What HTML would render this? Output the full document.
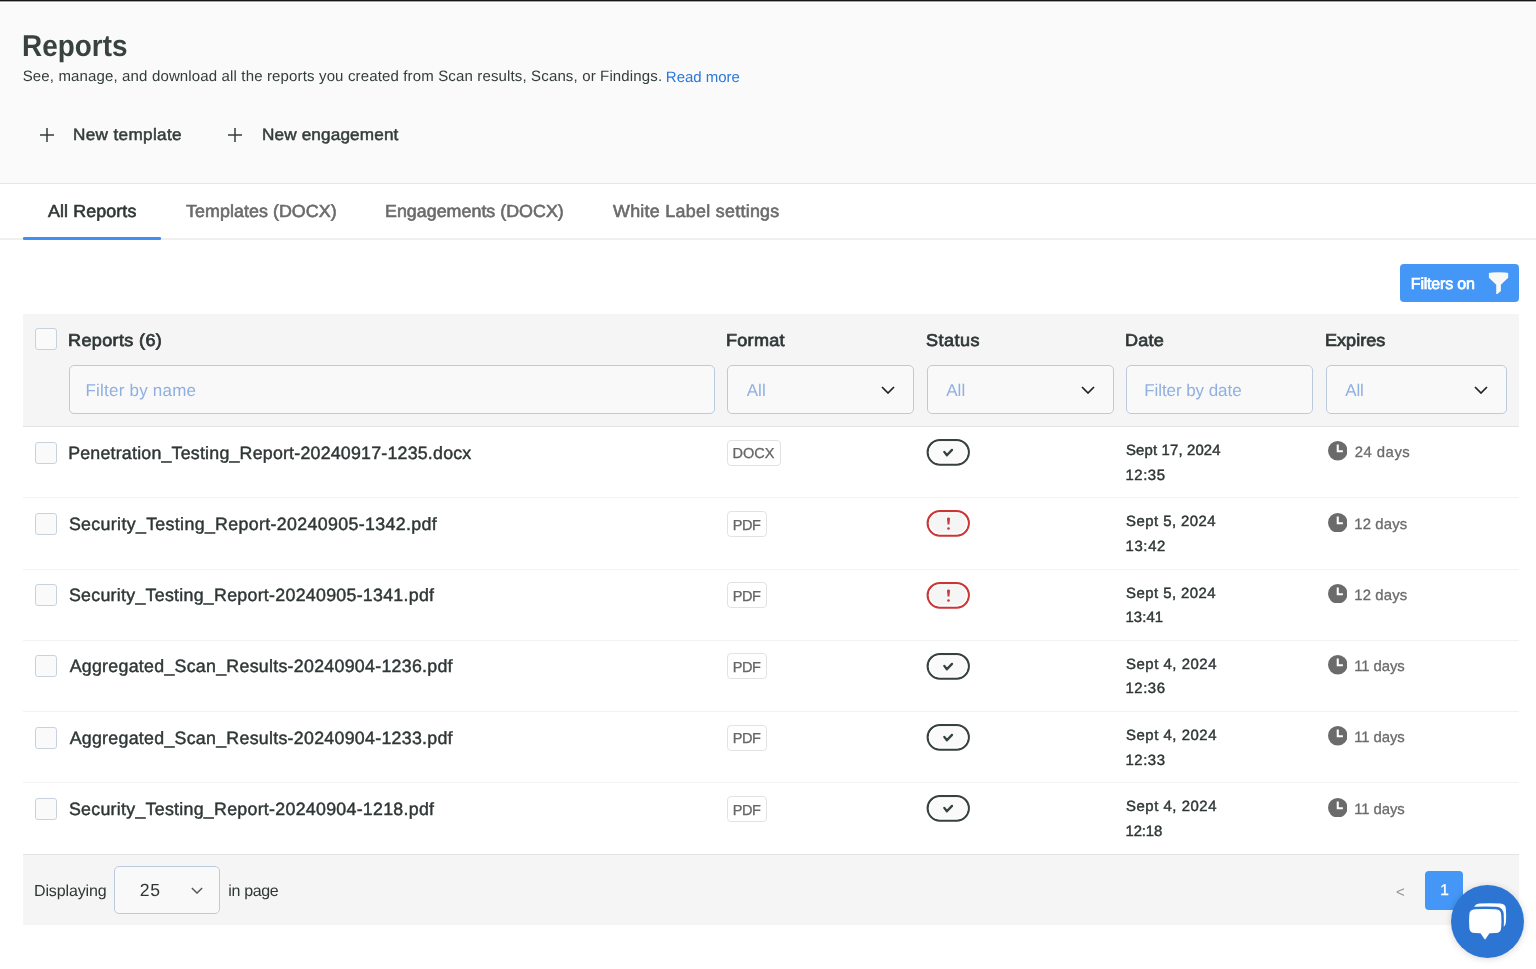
<!DOCTYPE html>
<html lang="en">
<head>
<meta charset="utf-8">
<title>Reports</title>
<style>
*{box-sizing:border-box;margin:0;padding:0}
html,body{width:1536px;height:969px;overflow:hidden;background:#fff}
body{text-rendering:geometricPrecision;font-family:"Liberation Sans",Arial,sans-serif;color:#333d3b;position:relative}
.abs{position:absolute;white-space:nowrap;line-height:1}
.topbar{position:absolute;left:0;top:0;width:1536px;height:3px;background:linear-gradient(#161616 0,#161616 1px,#a4a4a4 1px,#a4a4a4 2px,#fff 2px,#fff 3px)}
.head{position:absolute;left:0;top:0;width:1536px;height:184px;background:#fafafa;border-bottom:1px solid #e6e6e6}
.med{-webkit-text-stroke:0.3px currentColor}
.semi{-webkit-text-stroke:0.6px currentColor}
.med2{-webkit-text-stroke:0.45px currentColor}
.semi5{-webkit-text-stroke:0.5px currentColor}
h1{font-size:30.2px;font-weight:700;left:23px;top:31.75px;letter-spacing:0;color:#38423f;transform:scaleX(0.925);transform-origin:0 0}
.sub{font-size:15px;left:23px;top:68.5px;letter-spacing:0;color:#333d3b}
.sub a{color:#2a78d8;text-decoration:none;position:relative;top:1.05px}
.btxt{font-size:16.5px;top:127.1px;transform:scaleX(1.04);transform-origin:0 0}
.plus{position:absolute;width:14px;height:14px}
.tabs{position:absolute;left:0;top:184px;width:1536px;height:56px;border-bottom:2px solid #efefef}
.tab{font-size:17.5px;top:202.8px;color:#6b6b6b;transform:scaleX(1.02);transform-origin:0 0}
.tab.on{color:#2f3636}
.tabline{position:absolute;left:23px;top:237px;width:138px;height:3px;background:#3f8ff5;border-radius:1px}
.fbtn{position:absolute;left:1400px;top:264px;width:119px;height:38px;background:#4496f7;border-radius:4px;color:#fff}
.thead{position:absolute;left:23px;top:314px;width:1496px;height:113px;background:#f5f5f5;border-bottom:1px solid #e4e4e4}
.th{font-size:17.2px;-webkit-text-stroke:0.7px currentColor;top:332.4px;color:#2f3636;transform:scaleX(1.05);transform-origin:0 0}
.cb{position:absolute;left:35px;width:22px;height:22px;border:1px solid #c8d2df;border-radius:3px;background:#fafafb}
.inp{position:absolute;top:365px;height:48.5px;border:1px solid #bccadd;border-radius:5px;background:#f9f9f9;font-size:17px;color:#8fb0e0}
.inp span{position:absolute;top:15.8px;line-height:1;white-space:nowrap}
.chev{position:absolute;width:14px;height:8px}
.row{position:absolute;left:23px;width:1496px;border-bottom:1px solid #f2f2f2}
.fname{font-size:17.8px;left:69px;color:#2f3636}
.badge{position:absolute;left:727px;height:26px;border:1px solid #e2e2e2;border-radius:4px;font-size:14.5px;color:#666;background:#fff}
.badge span{position:absolute;left:5px;top:6.9px;line-height:1;-webkit-text-stroke:0.3px currentColor;letter-spacing:0}
.pill{position:absolute;left:926.5px;width:43px;height:26px;border:2px solid #374040;border-radius:13px;background:#f8f8f8}
.pill.err{border-color:#d03a3a;background:#f5f5f5}
.date{font-size:14.9px;left:1126px;color:#2f3636;letter-spacing:0}
.exp{font-size:14.9px;left:1355px;color:#6b6b6b;letter-spacing:0}
.clock{position:absolute;left:1327.8px;width:19.5px;height:19.5px}
.foot{position:absolute;left:23px;top:854px;width:1496px;height:71px;background:#f5f5f5;border-top:1px solid #e4e4e4}
.ft{font-size:16px;top:883.9px;color:#2f3636}
.pg{position:absolute;left:1425px;top:871px;width:38px;height:38.5px;background:#4496f7;border-radius:4px;color:#fff}
.chat{position:absolute;left:1451px;top:885px;width:73px;height:73px;border-radius:50%;background:#2c75d3;box-shadow:0 1px 7px rgba(0,0,0,.16)}
#title{letter-spacing:0.016px;margin-left:-0.75px}
#subt{letter-spacing:0.146px;margin-left:-0.35px}
#rm{letter-spacing:-0.031px;margin-left:-0.6px}
#b1{letter-spacing:0.327px;margin-left:-0.7px}
#b2{letter-spacing:0.135px;margin-left:-0.4px}
#t1{letter-spacing:0.1px;margin-left:0.2px}
#t2{letter-spacing:0.056px;margin-left:0.2px}
#t3{letter-spacing:0.012px;margin-left:-0.2px}
#t4{letter-spacing:0.284px;margin-left:0.25px}
#fon{letter-spacing:-0.194px;margin-left:-1.2px}
#h1{letter-spacing:0.34px;margin-left:-0.7px}
#h2{letter-spacing:0.26px;margin-left:-0.8px}
#h3{letter-spacing:0.45px;margin-left:-0.85px}
#h4{letter-spacing:0.25px;margin-left:-0.6px}
#h5{letter-spacing:0.025px;margin-left:-0.9px}
#p1{letter-spacing:0.223px;margin-left:-0.55px}
#p2{letter-spacing:0.05px;margin-left:0.7px}
#p3{letter-spacing:0.05px;margin-left:0.7px}
#p4{letter-spacing:-0.062px;margin-left:-0.85px}
#p5{letter-spacing:-0.225px;margin-left:0.3px}
#fn0{letter-spacing:0.219px;margin-left:-0.85px}
#fn1{letter-spacing:0.345px;margin-left:-0.1px}
#fn2{letter-spacing:0.281px;margin-left:-0.1px}
#fn3{letter-spacing:0.28px;margin-left:0.65px}
#fn4{letter-spacing:0.28px;margin-left:0.65px}
#fn5{letter-spacing:0.281px;margin-left:-0.1px}
#bd0{letter-spacing:0.0px;margin-left:-0.5px}
#bd1{letter-spacing:-0.375px;margin-left:-0.3px}
#bd2{letter-spacing:-0.375px;margin-left:-0.3px}
#bd3{letter-spacing:-0.375px;margin-left:-0.3px}
#bd4{letter-spacing:-0.375px;margin-left:-0.3px}
#bd5{letter-spacing:-0.375px;margin-left:-0.3px}
#d0a{letter-spacing:0.15px;margin-left:0.0px}
#d0b{letter-spacing:0.55px;margin-left:-0.5px}
#d1a{letter-spacing:0.472px;margin-left:0.0px}
#d1b{letter-spacing:0.649px;margin-left:-0.5px}
#d2a{letter-spacing:0.472px;margin-left:0.0px}
#d2b{letter-spacing:0.062px;margin-left:-0.5px}
#d3a{letter-spacing:0.545px;margin-left:0.0px}
#d3b{letter-spacing:0.55px;margin-left:-0.5px}
#d4a{letter-spacing:0.545px;margin-left:0.0px}
#d4b{letter-spacing:0.55px;margin-left:-0.5px}
#d5a{letter-spacing:0.545px;margin-left:0.0px}
#d5b{letter-spacing:-0.125px;margin-left:-0.5px}
#e0{letter-spacing:0.484px;margin-left:-0.3px}
#e1{letter-spacing:0.15px;margin-left:-0.8px}
#e2{letter-spacing:0.15px;margin-left:-0.8px}
#e3{letter-spacing:-0.075px;margin-left:-0.8px}
#e4{letter-spacing:-0.075px;margin-left:-0.8px}
#e5{letter-spacing:-0.075px;margin-left:-0.8px}
#f1{letter-spacing:-0.127px;margin-left:-1.05px}
#f25{letter-spacing:0.6px;margin-left:-0.15px}
#f2{letter-spacing:-0.325px;margin-left:-0.8px}
#lt{letter-spacing:2.1px;margin-left:-0.05px}

</style>
</head>
<body>
<div id="wrap" style="position:absolute;left:0;top:0;width:1536px;height:969px;will-change:transform">
<div class="head"></div>
<div class="topbar"></div>
<h1 class="abs" id="title">Reports</h1>
<div class="abs sub" id="sub"><span id="subt">See, manage, and download all the reports you created from Scan results, Scans, or Findings.</span> <a id="rm">Read more</a></div>

<svg class="plus" style="left:40px;top:127.5px" viewBox="0 0 14 14"><path d="M0 7H14M7 0V14" stroke="#333d3b" stroke-width="1.5" fill="none"/></svg>
<div class="abs btxt semi5" id="b1" style="left:74px">New template</div>
<svg class="plus" style="left:227.7px;top:127.5px" viewBox="0 0 14 14"><path d="M0 7H14M7 0V14" stroke="#333d3b" stroke-width="1.5" fill="none"/></svg>
<div class="abs btxt semi5" id="b2" style="left:262px">New engagement</div>

<div class="tabs"></div>
<div class="abs tab on semi" id="t1" style="left:47.5px">All Reports</div>
<div class="abs tab semi" id="t2" style="left:186px">Templates (DOCX)</div>
<div class="abs tab semi" id="t3" style="left:385px">Engagements (DOCX)</div>
<div class="abs tab semi" id="t4" style="left:613px">White Label settings</div>
<div class="tabline"></div>

<div class="fbtn"><span class="abs" id="fon" style="left:12px;top:13px;font-size:16px;-webkit-text-stroke:0.7px #fff">Filters on</span>
<svg style="position:absolute;left:0;top:0" width="119" height="38" viewBox="0 0 119 38"><path d="M88.9 9 L92 8.6 Q98.5 7.8 105 8.6 L108.2 9 V13.7 L100.9 20.8 V27 L97.4 30 H96.2 V20.8 L88.9 13.7 Z" fill="#f8f8f8"/></svg>
</div>

<div class="thead"></div>
<div class="cb" style="top:328px"></div>
<div class="abs th" id="h1" style="left:69px">Reports (6)</div>
<div class="abs th" id="h2" style="left:727px">Format</div>
<div class="abs th" id="h3" style="left:926.5px">Status</div>
<div class="abs th" id="h4" style="left:1126px">Date</div>
<div class="abs th" id="h5" style="left:1326px">Expires</div>

<div class="inp" style="left:69px;width:646px"><span id="p1" style="left:16px">Filter by name</span></div>
<div class="inp" style="left:727px;width:187px"><span id="p2" style="left:18px">All</span><svg class="chev" style="left:153px;top:20px" viewBox="0 0 14 8"><path d="M1 1 L7 7 L13 1" fill="none" stroke="#222" stroke-width="1.7"/></svg></div>
<div class="inp" style="left:926.5px;width:187px"><span id="p3" style="left:18px">All</span><svg class="chev" style="left:153px;top:20px" viewBox="0 0 14 8"><path d="M1 1 L7 7 L13 1" fill="none" stroke="#222" stroke-width="1.7"/></svg></div>
<div class="inp" style="left:1126px;width:187px"><span id="p4" style="left:18px">Filter by date</span></div>
<div class="inp" style="left:1326px;width:181px"><span id="p5" style="left:18px">All</span><svg class="chev" style="left:147px;top:20px" viewBox="0 0 14 8"><path d="M1 1 L7 7 L13 1" fill="none" stroke="#222" stroke-width="1.7"/></svg></div>

<div class="row" style="top:427.00px;height:71.25px"></div>
<div class="cb" style="top:441.50px"></div>
<div class="abs fname med2" id="fn0" style="top:444.60px">Penetration_Testing_Report-20240917-1235.docx</div>
<div class="badge" style="top:439.50px;width:54px"><span id="bd0">DOCX</span></div>
<svg style="position:absolute;left:925px;top:438.00px" width="46" height="29" viewBox="0 0 46 29"><rect x="2.7" y="2.05" width="41.1" height="24.5" rx="12.25" fill="#fafafa" stroke="#364140" stroke-width="2.2"/><rect x="4.4" y="3.75" width="37.7" height="21.1" rx="10.55" fill="none" stroke="#fff" stroke-width="1.2"/><path d="M19.3 13.9 L21.9 17.3 L27 11.9" fill="none" stroke="#364140" stroke-width="2.3" stroke-linecap="round" stroke-linejoin="round"/></svg>
<div class="abs date med2" id="d0a" style="top:444.00px">Sept 17, 2024</div>
<div class="abs date med2" id="d0b" style="top:468.60px">12:35</div>
<svg class="clock" style="top:441.40px" viewBox="0 0 19 19"><circle cx="9.5" cy="9.5" r="9.5" fill="#6b6b6b"/><path d="M9.5 3.5 V10 H14.5" fill="none" stroke="#fff" stroke-width="2"/></svg>
<div class="abs exp med" id="e0" style="top:446.40px">24 days</div>
<div class="row" style="top:498.25px;height:71.25px"></div>
<div class="cb" style="top:512.75px"></div>
<div class="abs fname med2" id="fn1" style="top:515.85px">Security_Testing_Report-20240905-1342.pdf</div>
<div class="badge" style="top:510.75px;width:40px"><span id="bd1">PDF</span></div>
<svg style="position:absolute;left:925px;top:509.25px" width="46" height="29" viewBox="0 0 46 29"><rect x="2.7" y="2.05" width="41.1" height="24.5" rx="12.25" fill="#f5f5f5" stroke="#cc3535" stroke-width="2.2"/><rect x="4.4" y="3.75" width="37.7" height="21.1" rx="10.55" fill="none" stroke="#fff" stroke-width="1.2"/><path d="M22 9.6 Q22 8.6 23.5 8.6 Q25 8.6 25 9.6 L24.4 15.4 H22.6 Z" fill="#cc3535"/><circle cx="23.5" cy="19.5" r="1.3" fill="#cc3535"/></svg>
<div class="abs date med2" id="d1a" style="top:515.25px">Sept 5, 2024</div>
<div class="abs date med2" id="d1b" style="top:539.85px">13:42</div>
<svg class="clock" style="top:512.65px" viewBox="0 0 19 19"><circle cx="9.5" cy="9.5" r="9.5" fill="#6b6b6b"/><path d="M9.5 3.5 V10 H14.5" fill="none" stroke="#fff" stroke-width="2"/></svg>
<div class="abs exp med" id="e1" style="top:517.65px">12 days</div>
<div class="row" style="top:569.50px;height:71.25px"></div>
<div class="cb" style="top:584.00px"></div>
<div class="abs fname med2" id="fn2" style="top:587.10px">Security_Testing_Report-20240905-1341.pdf</div>
<div class="badge" style="top:582.00px;width:40px"><span id="bd2">PDF</span></div>
<svg style="position:absolute;left:925px;top:580.50px" width="46" height="29" viewBox="0 0 46 29"><rect x="2.7" y="2.05" width="41.1" height="24.5" rx="12.25" fill="#f5f5f5" stroke="#cc3535" stroke-width="2.2"/><rect x="4.4" y="3.75" width="37.7" height="21.1" rx="10.55" fill="none" stroke="#fff" stroke-width="1.2"/><path d="M22 9.6 Q22 8.6 23.5 8.6 Q25 8.6 25 9.6 L24.4 15.4 H22.6 Z" fill="#cc3535"/><circle cx="23.5" cy="19.5" r="1.3" fill="#cc3535"/></svg>
<div class="abs date med2" id="d2a" style="top:586.50px">Sept 5, 2024</div>
<div class="abs date med2" id="d2b" style="top:611.10px">13:41</div>
<svg class="clock" style="top:583.90px" viewBox="0 0 19 19"><circle cx="9.5" cy="9.5" r="9.5" fill="#6b6b6b"/><path d="M9.5 3.5 V10 H14.5" fill="none" stroke="#fff" stroke-width="2"/></svg>
<div class="abs exp med" id="e2" style="top:588.90px">12 days</div>
<div class="row" style="top:640.75px;height:71.25px"></div>
<div class="cb" style="top:655.25px"></div>
<div class="abs fname med2" id="fn3" style="top:658.35px">Aggregated_Scan_Results-20240904-1236.pdf</div>
<div class="badge" style="top:653.25px;width:40px"><span id="bd3">PDF</span></div>
<svg style="position:absolute;left:925px;top:651.75px" width="46" height="29" viewBox="0 0 46 29"><rect x="2.7" y="2.05" width="41.1" height="24.5" rx="12.25" fill="#fafafa" stroke="#364140" stroke-width="2.2"/><rect x="4.4" y="3.75" width="37.7" height="21.1" rx="10.55" fill="none" stroke="#fff" stroke-width="1.2"/><path d="M19.3 13.9 L21.9 17.3 L27 11.9" fill="none" stroke="#364140" stroke-width="2.3" stroke-linecap="round" stroke-linejoin="round"/></svg>
<div class="abs date med2" id="d3a" style="top:657.75px">Sept 4, 2024</div>
<div class="abs date med2" id="d3b" style="top:682.35px">12:36</div>
<svg class="clock" style="top:655.15px" viewBox="0 0 19 19"><circle cx="9.5" cy="9.5" r="9.5" fill="#6b6b6b"/><path d="M9.5 3.5 V10 H14.5" fill="none" stroke="#fff" stroke-width="2"/></svg>
<div class="abs exp med" id="e3" style="top:660.15px">11 days</div>
<div class="row" style="top:712.00px;height:71.25px"></div>
<div class="cb" style="top:726.50px"></div>
<div class="abs fname med2" id="fn4" style="top:729.60px">Aggregated_Scan_Results-20240904-1233.pdf</div>
<div class="badge" style="top:724.50px;width:40px"><span id="bd4">PDF</span></div>
<svg style="position:absolute;left:925px;top:723.00px" width="46" height="29" viewBox="0 0 46 29"><rect x="2.7" y="2.05" width="41.1" height="24.5" rx="12.25" fill="#fafafa" stroke="#364140" stroke-width="2.2"/><rect x="4.4" y="3.75" width="37.7" height="21.1" rx="10.55" fill="none" stroke="#fff" stroke-width="1.2"/><path d="M19.3 13.9 L21.9 17.3 L27 11.9" fill="none" stroke="#364140" stroke-width="2.3" stroke-linecap="round" stroke-linejoin="round"/></svg>
<div class="abs date med2" id="d4a" style="top:729.00px">Sept 4, 2024</div>
<div class="abs date med2" id="d4b" style="top:753.60px">12:33</div>
<svg class="clock" style="top:726.40px" viewBox="0 0 19 19"><circle cx="9.5" cy="9.5" r="9.5" fill="#6b6b6b"/><path d="M9.5 3.5 V10 H14.5" fill="none" stroke="#fff" stroke-width="2"/></svg>
<div class="abs exp med" id="e4" style="top:731.40px">11 days</div>
<div class="cb" style="top:797.75px"></div>
<div class="abs fname med2" id="fn5" style="top:800.85px">Security_Testing_Report-20240904-1218.pdf</div>
<div class="badge" style="top:795.75px;width:40px"><span id="bd5">PDF</span></div>
<svg style="position:absolute;left:925px;top:794.25px" width="46" height="29" viewBox="0 0 46 29"><rect x="2.7" y="2.05" width="41.1" height="24.5" rx="12.25" fill="#fafafa" stroke="#364140" stroke-width="2.2"/><rect x="4.4" y="3.75" width="37.7" height="21.1" rx="10.55" fill="none" stroke="#fff" stroke-width="1.2"/><path d="M19.3 13.9 L21.9 17.3 L27 11.9" fill="none" stroke="#364140" stroke-width="2.3" stroke-linecap="round" stroke-linejoin="round"/></svg>
<div class="abs date med2" id="d5a" style="top:800.25px">Sept 4, 2024</div>
<div class="abs date med2" id="d5b" style="top:824.85px">12:18</div>
<svg class="clock" style="top:797.65px" viewBox="0 0 19 19"><circle cx="9.5" cy="9.5" r="9.5" fill="#6b6b6b"/><path d="M9.5 3.5 V10 H14.5" fill="none" stroke="#fff" stroke-width="2"/></svg>
<div class="abs exp med" id="e5" style="top:802.65px">11 days</div>

<div class="foot"></div>
<div class="abs ft" id="f1" style="left:35px">Displaying</div>
<div class="inp" style="left:114px;top:866px;width:105.5px;height:48px;color:#2f3636"><span id="f25" style="left:25px;top:15px;font-size:17.6px">25</span><svg class="chev" style="left:75.5px;top:19.5px;width:12px;height:7px" viewBox="0 0 14 8"><path d="M1 1 L7 7 L13 1" fill="none" stroke="#555" stroke-width="1.6"/></svg></div>
<div class="abs ft" id="f2" style="left:229px">in page</div>
<div class="abs" id="lt" style="left:1396px;top:884.6px;font-size:15px;color:#969696">&lt;</div>
<div class="pg"><span class="abs med" style="left:15.2px;top:12px;font-size:15.5px">1</span></div>
<div class="chat">
<svg style="position:absolute;left:0;top:0" width="73" height="73" viewBox="0 0 73 73">
<path transform="translate(4.7,-5.6)" d="M18.3 30 Q18.3 24.4 24 24.2 Q34 23.6 44.5 24.2 Q50.2 24.4 50.2 30 Q50.7 36 50.2 42.5 Q50 48 44.5 48.1 Q34 48.7 24 48.1 Q18.5 48 18.3 42.5 Q17.8 36 18.3 30 Z" fill="#fff"/>
<path d="M18.3 30 Q18.3 24.4 24 24.2 Q34 23.6 44.5 24.2 Q50.2 24.4 50.2 30 Q50.7 36 50.2 42.5 Q50 48 44.5 48.1 Q34 48.7 24 48.1 Q18.5 48 18.3 42.5 Q17.8 36 18.3 30 Z" fill="#2c75d3" stroke="#2c75d3" stroke-width="5"/>
<path d="M18.3 30 Q18.3 24.4 24 24.2 Q34 23.6 44.5 24.2 Q50.2 24.4 50.2 30 Q50.7 36 50.2 42.5 Q50 48 44.5 48.1 Q34 48.7 24 48.1 Q18.5 48 18.3 42.5 Q17.8 36 18.3 30 Z" fill="#fff"/>
<path d="M29.2 47.8 H38.8 L34.6 54 Q34 54.8 33.4 54 Z" fill="#fff"/>
</svg>
</div>
</div>
</body>
</html>
